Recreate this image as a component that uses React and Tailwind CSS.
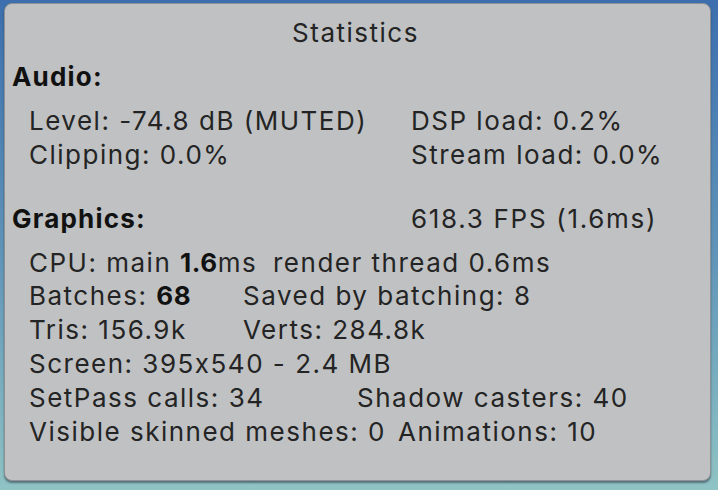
import React from 'react';

const Row = ({ children, className = '' }) => (
  <div className={`h-[34px] leading-[34px] whitespace-nowrap ${className}`}>{children}</div>
);

export default function App() {
  return (
    <div className="w-[718px] h-[490px] overflow-hidden bg-gradient-to-b from-[#3d6fae] via-[#5f93b8] to-[#8fc3c4] pl-[4px] pr-[7px] pt-[3px] font-['Inter',_sans-serif] text-[26px] tracking-[1.5px] text-[#242424]">
      <div className="h-[478px] rounded-[8px] border border-[#8d9094] bg-[#bfc1c3] shadow-[0_2px_2px_rgba(40,50,60,0.55)] pt-[12px]">
        <Row className="text-center pr-[4px]">Statistics</Row>

        <Row className="mt-[10px] pl-[7px] font-bold tracking-[1.2px] text-[#111]">Audio:</Row>
        <div className="mt-[10px] pl-[24px]">
          <Row>
            <span className="inline-block w-[382px]">Level: -74.8 dB (MUTED)</span>
            DSP load: 0.2%
          </Row>
          <Row>
            <span className="inline-block w-[382px]">Clipping: 0.0%</span>
            Stream load: 0.0%
          </Row>
        </div>

        <Row className="mt-[30px] pl-[7px]">
          <span className="inline-block w-[399px] font-bold tracking-[1.2px] text-[#111]">Graphics:</span>
          <span className="tracking-[1.7px]">618.3 FPS (1.6ms)</span>
        </Row>
        <div className="mt-[10px] pl-[24px]">
          <Row>
            <span className="inline-block w-[244px]">
              CPU: main <b className="tracking-[0.5px] text-[#111]">1.6</b>ms
            </span>
            render thread 0.6ms
          </Row>
          <Row className="-mt-[1px]">
            <span className="inline-block w-[214px]">
              Batches: <b className="tracking-[0.5px] text-[#111]">68</b>
            </span>
            Saved by batching: 8
          </Row>
          <Row>
            <span className="inline-block w-[214px]">Tris: 156.9k</span>
            Verts: 284.8k
          </Row>
          <Row>Screen: 395x540 - 2.4 MB</Row>
          <Row>
            <span className="inline-block w-[328px]">SetPass calls: 34</span>
            Shadow casters: 40
          </Row>
          <Row>
            <span className="inline-block w-[369px]">Visible skinned meshes: 0</span>
            Animations: 10
          </Row>
        </div>
      </div>
    </div>
  );
}
